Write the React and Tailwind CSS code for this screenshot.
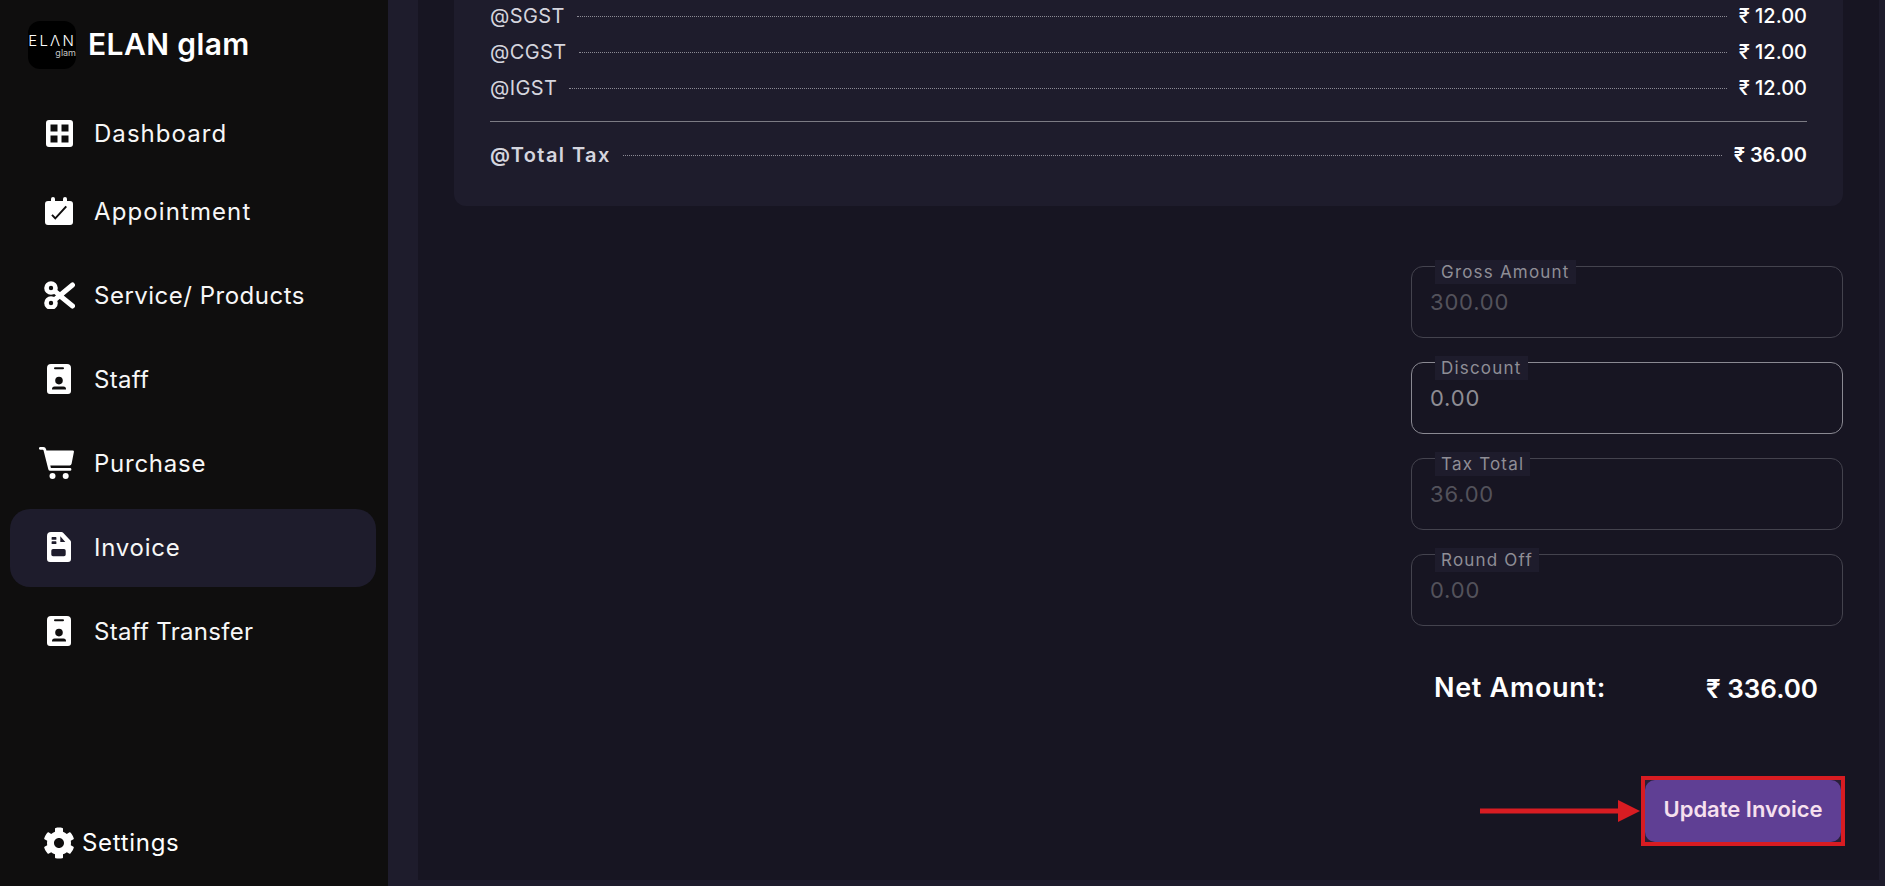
import React from "react";
import { FaCog } from "react-icons/fa";

const DashIcon = ({ className }) => (
  <svg viewBox="0 0 27 27" className={className} fill="currentColor">
    <path fillRule="evenodd" d="M3 0h21a3 3 0 0 1 3 3v21a3 3 0 0 1-3 3H3a3 3 0 0 1-3-3V3a3 3 0 0 1 3-3zM4.5 4.5v7h7v-7zm11 0v7h7v-7zM4.5 15.5v7h7v-7zm11 0v7h7v-7z" />
  </svg>
);

const CalIcon = ({ className }) => (
  <svg viewBox="0 0 28 28" className={className} fill="currentColor">
    <rect x="6" y="0" width="4" height="7" rx="2" />
    <rect x="18" y="0" width="4" height="7" rx="2" />
    <path fillRule="evenodd" d="M3 4h22a3 3 0 0 1 3 3v18a3 3 0 0 1-3 3H3a3 3 0 0 1-3-3V7a3 3 0 0 1 3-3zM7.7 17.2l-1.4 1.4 4 4.2L22 10l-1.5-1.3-10.2 11.2z" />
  </svg>
);

const ScissorsIcon = ({ className }) => (
  <svg viewBox="0 0 31 28" className={className} fill="none" stroke="currentColor" strokeLinecap="round">
    <circle cx="7" cy="7" r="4.5" strokeWidth="4.6" />
    <circle cx="7" cy="22" r="4.500" strokeWidth="4.6" />
    <path d="M15 14 L28.500 25" strokeWidth="5" />
    <path d="M11 18.500 L28.500 4" strokeWidth="5" />
    <path d="M11 10.500 L17 15" strokeWidth="5" />
  </svg>
);

const BadgeIcon = ({ className }) => (
  <svg viewBox="0 0 24 30" className={className} fill="currentColor">
    <path fillRule="evenodd" d="M4 0h16a4 4 0 0 1 4 4v23a3 3 0 0 1-3 3H3a3 3 0 0 1-3-3V4a4 4 0 0 1 4-4zM8 3.2a1 1 0 0 0 0 2h8a1 1 0 0 0 0-2zM12 12.8a3.8 3.8 0 1 0 0 7.6 3.8 3.8 0 0 0 0-7.6zM7.5 22.5a2.5 2.5 0 0 0-2.5 2.5v.5h14V25a2.5 2.5 0 0 0-2.5-2.5z" />
  </svg>
);

const CartIcon = ({ className }) => (
  <svg viewBox="0 0 35 32" className={className} fill="currentColor">
    <path d="M1.3 0h3a3 3 0 0 1 2.8 2.2L7.4 3.4H33.6a1.3 1.3 0 0 1 1.3 1.6L32.6 16.8a2 2 0 0 1-2 1.6H11.3L11.9 21H31a1.4 1.4 0 0 1 0 2.8H11.3a2 2 0 0 1-2-1.6L4.5 3.3a.8.8 0 0 0-.8-.6H1.3a1.35 1.35 0 0 1 0-2.7z" />
    <circle cx="13.5" cy="29" r="3" />
    <circle cx="26.7" cy="29" r="3" />
  </svg>
);

const InvoiceIcon = ({ className }) => (
  <svg viewBox="0 0 24 30" className={className} fill="currentColor">
    <path fillRule="evenodd" d="M4 0h10.5a2 2 0 0 1 1.4.6l7.5 8a2 2 0 0 1 .6 1.4v17a3 3 0 0 1-3 3H3a3 3 0 0 1-3-3V4a4 4 0 0 1 4-4zM5.2 5a.6.6 0 0 0-.6.6v1.6a.6.6 0 0 0 .6.6h3.6a.6.6 0 0 0 .6-.6V5.6a.6.6 0 0 0-.6-.6zM5.2 9.3a.6.6 0 0 0-.6.6v1.6a.6.6 0 0 0 .6.6h3.6a.6.6 0 0 0 .6-.6V9.900a.6.6 0 0 0-.6-.6zM13.300 4.300V10h5zM6 17a1.700 1.700 0 0 0-1.700 1.700v3.900A1.700 1.700 0 0 0 6 24.300h11a1.700 1.700 0 0 0 1.700-1.700v-3.900A1.700 1.700 0 0 0 17 17z" />
  </svg>
);

const nav = [
  { label: "Dashboard", Icon: DashIcon, size: "w-[27px] h-[27px]", track: "tracking-[1.05px]", row: "-mb-[6px]" },
  { label: "Appointment", Icon: CalIcon, size: "w-[28px] h-[28px]", track: "tracking-[1.1px]", row: "" },
  { label: "Service/ Products", Icon: ScissorsIcon, size: "w-[31px] h-[28px]", track: "tracking-[0.5px]", row: "" },
  { label: "Staff", Icon: BadgeIcon, size: "w-[24px] h-[30px]", track: "tracking-[0.3px]", row: "" },
  { label: "Purchase", Icon: CartIcon, size: "w-[35px] h-[32px] -ml-[5px]", track: "tracking-[0.75px]", row: "" },
  { label: "Invoice", Icon: InvoiceIcon, size: "w-[24px] h-[30px]", track: "tracking-[0.75px]", row: "", active: true },
  { label: "Staff Transfer", Icon: BadgeIcon, size: "w-[24px] h-[30px]", track: "tracking-[0.3px]", row: "" },
];

const rows = [
  { label: "@SGST", value: "₹ 12.00" },
  { label: "@CGST", value: "₹ 12.00" },
  { label: "@IGST", value: "₹ 12.00" },
];

const fields = [
  { label: "Gross Amount", value: "300.00" },
  { label: "Discount", value: "0.00", active: true },
  { label: "Tax Total", value: "36.00" },
  { label: "Round Off", value: "0.00" },
];

function Row({ label, value, bold }) {
  return (
    <div className={`flex items-center h-9 ${bold ? "font-semibold" : ""}`}>
      <span className={`text-[20px] text-[#d5d5de] ${bold ? "tracking-[1.4px]" : "tracking-[0.4px]"}`}>{label}</span>
      <span className="flex-1 mx-3 border-t border-dotted border-[#8b8a94]" />
      <span className={`text-[20px] text-white ${bold ? "font-semibold" : "font-medium"}`}>{value}</span>
    </div>
  );
}

function Field({ label, value, active }) {
  return (
    <div className={`relative h-[72px] rounded-xl border ${active ? "border-[#8a8992]" : "border-[#44434e]"} px-[18px] pt-[21px]`}>
      <span className="absolute left-[23px] -top-[7px] h-6 px-[6px] bg-[#1e1c2c] text-[17px] leading-6 text-[#8f8e96] whitespace-nowrap tracking-[1.2px]">{label}</span>
      <div className={`text-[22px] leading-7 tracking-[0.8px] ${active ? "text-[#8e8d94]" : "text-[#53525b]"}`}>{value}</div>
    </div>
  );
}

export default function App() {
  return (
    <div className="flex h-[886px] w-full overflow-hidden bg-[#1e1c2c] font-['Inter','Liberation_Sans',sans-serif]">
      <aside className="w-[388px] shrink-0 bg-[#0f0e0e] flex flex-col text-white">
        <div className="flex items-center h-[90px] pl-[28px]">
          <div className="w-12 h-12 rounded-xl bg-black flex flex-col items-end justify-center text-white shrink-0">
            <span className="text-[15px] leading-[15px] tracking-[2.2px] font-light">ELΛN</span>
            <span className="text-[9px] leading-[10px] text-[#c4c4c4]">glam</span>
          </div>
          <span className="ml-3 text-[30px] font-semibold tracking-[0.4px] pb-[2px]">ELAN glam</span>
        </div>
        <nav className="flex flex-col gap-[6px] pl-[10px] pr-[12px] mt-[5px]">
          {nav.map(({ label, Icon, size, track, row, active }) => (
            <div key={label} className={`flex items-center h-[78px] rounded-[20px] ${row} ${active ? "bg-[#1e1c2c]" : ""}`}>
              <span className="ml-[29px] w-[40px] flex justify-center shrink-0 pb-[2px]">
                <Icon className={size} />
              </span>
              <span className={`ml-[15px] text-[24px] text-[#f7f7f7] ${track}`}>{label}</span>
            </div>
          ))}
        </nav>
        <div className="mt-auto flex items-center pl-[43px] h-[32px] mb-[27px]">
          <FaCog className="w-8 h-8" />
          <span className="ml-[7px] text-[24px] tracking-[0.7px]">Settings</span>
        </div>
      </aside>

      <div className="flex-1 min-w-0 pl-[30px] pr-[6px] pb-[6px]">
        <main className="relative h-full bg-[#171522] px-[36px] flex flex-col">
          <section className="bg-[#1e1c2c] rounded-b-xl px-[36px] h-[208px] -mt-[2px] shrink-0 flex flex-col">
            {rows.map((r) => (
              <Row key={r.label} {...r} />
            ))}
            <div className="mt-[15px] border-t border-[#7c7b84]" />
            <div className="mt-[15px]">
              <Row label="@Total Tax" value="₹ 36.00" bold />
            </div>
          </section>

          <div className="self-end w-[432px] mt-[60px] flex flex-col gap-6">
            {fields.map((f) => (
              <Field key={f.label} {...f} />
            ))}
          </div>

          <div className="self-end flex justify-between items-center h-9 w-[384px] mr-[25px] mt-[44px] font-semibold text-white">
            <span className="text-[27px] tracking-[0.7px]">Net Amount:</span>
            <span className="text-[26px]">₹ 336.00</span>
          </div>

          <div className="self-end mt-[70px] -mr-[2px] w-[204px] h-[70px] border-[4px] border-[#d81c22] bg-[#2a1f38]">
            <button className="w-full h-full rounded-[10px] bg-[#5f3f94] text-[22px] font-semibold text-[#f6e0ee] pb-[3px]">
              Update Invoice
            </button>
          </div>
          <svg className="absolute right-[239px] bottom-[57px]" width="160" height="24" viewBox="0 0 160 24" fill="#d81c22">
            <rect x="0" y="9.500" width="140" height="5" />
            <polygon points="138,1 160,12 138,23" />
          </svg>
        </main>
      </div>
    </div>
  );
}
